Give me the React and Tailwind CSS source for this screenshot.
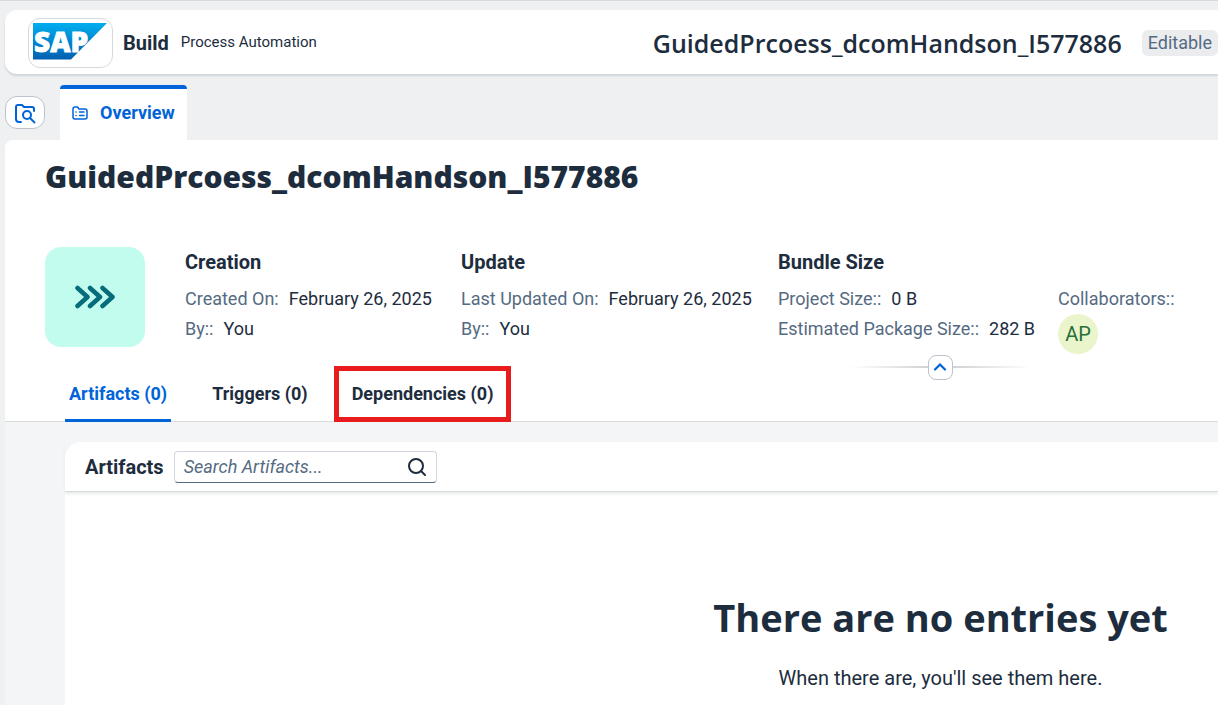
import React from "react";

function SapLogo() {
  return (
    <svg viewBox="0 0 75 37" className="block h-[37px] w-[75px] overflow-visible" role="img" aria-label="SAP">
      <defs>
        <linearGradient id="sap" x1="0" y1="0" x2="0" y2="1">
          <stop offset="0" stopColor="#00aeef" />
          <stop offset="1" stopColor="#0060b0" />
        </linearGradient>
      </defs>
      <path d="M0 0H74L38 36.500H0Z" fill="url(#sap)" />
      <text x="1" y="29" fontFamily="Open Sans, sans-serif" fontWeight="800" fontSize="28" fill="#fff" stroke="#fff" strokeWidth="0.8">SAP</text>
    </svg>
  );
}

function Fact({ label, value }) {
  return (
    <div className="flex h-[30px] items-center gap-[10px] whitespace-nowrap">
      <dt className="text-[#556b82]">{label}</dt>
      <dd>{value}</dd>
    </div>
  );
}

function Facts({ title, facts }) {
  return (
    <section>
      <h3 className="mb-[7px] h-[30px] text-xl leading-[30px] font-bold">{title}</h3>
      <dl className="text-lg">
        {facts.map(([label, value]) => (
          <Fact key={label} label={label} value={value} />
        ))}
      </dl>
    </section>
  );
}

export default function App() {
  return (
    <div className="flex min-h-screen flex-col overflow-x-hidden border-t border-[#d9d9dc] bg-[#eff0f2] font-[Roboto,sans-serif] text-[#1d2d3e]">
      <header className="mt-[9px] ml-[5px] flex h-16 items-center rounded-l-xl bg-white pt-px pl-[23px] shadow-[0_2px_2px_#ced5db]">
        <a href="#home" className="flex h-[50px] w-[85px] shrink-0 items-start justify-center rounded-xl border border-[#d5dadf] pt-1">
          <SapLogo />
        </a>
        <span className="ml-[10px] text-xl font-bold">Build</span>
        <span className="ml-3 text-[15px]">Process Automation</span>
        <div className="ml-auto flex items-center gap-5">
          <span className="font-['Open_Sans',sans-serif] text-[25px] leading-9 font-semibold">GuidedPrcoess_dcomHandson_I577886</span>
          <span className="rounded-md bg-[#eaecee] px-[6px] text-lg leading-[26px] text-[#556b82]">Editable</span>
        </div>
      </header>

      <nav className="mt-[11px] flex h-[55px] items-center pl-[5px]">
        <button aria-label="Browse project" className="flex h-[33px] w-10 items-center justify-center rounded-xl border border-[#bcc3ca] bg-white text-[#0064d9]">
          <svg viewBox="0 0 24 22" className="h-[22px] w-6" fill="none" stroke="currentColor" strokeWidth="2" strokeLinecap="round" strokeLinejoin="round">
            <path d="M8 20H6a3 3 0 0 1-3-3V5a2 2 0 0 1 2-2h4l2 2h8a2 2 0 0 1 2 2v2" />
            <circle cx="14" cy="13" r="4" />
            <path d="M17 16l4.500 4.500" />
          </svg>
        </button>
        <button className="ml-[15px] flex h-full items-center gap-3 rounded-t-sm border-t-4 border-[#0064d9] bg-white px-3 pb-1 text-lg font-bold text-[#0064d9]">
          <svg viewBox="0 0 16 14" className="h-[14px] w-4" fill="none" stroke="currentColor" strokeWidth="1.500" strokeLinecap="round" strokeLinejoin="round">
            <path d="M1 3a2 2 0 0 1 2-2h2.500l1.500 2H13a2 2 0 0 1 2 2v6a2 2 0 0 1-2 2H3a2 2 0 0 1-2-2Z" />
            <path d="M4 6h.1M7.500 6H12M4 9.500h.1M7.500 9.500H12" />
          </svg>
          Overview
        </button>
      </nav>

      <main className="ml-[5px] flex grow flex-col rounded-tl-lg bg-[#f4f5f7]">
        <div className="rounded-tl-lg border-b border-[#d9dbdd] bg-white">
          <h1 className="px-10 pt-[17px] font-['Open_Sans',sans-serif] text-[30px] leading-10 font-extrabold">GuidedPrcoess_dcomHandson_I577886</h1>
          <div className="flex items-start px-10 pt-[50px]">
            <div className="mr-10 flex size-[100px] shrink-0 items-center justify-center rounded-2xl bg-[#c2fcee]">
              <svg viewBox="0 0 42 24" className="h-6 w-[42px]" fill="none" stroke="#046c7a" strokeWidth="4.500" strokeLinecap="round" strokeLinejoin="round">
                <path d="M3.500 3l10 9-10 9M16 3l10 9-10 9M28.500 3l10 9-10 9" />
              </svg>
            </div>
            <div className="grid grid-cols-[276px_317px_280px_auto]">
              <Facts title="Creation" facts={[["Created On:", "February 26, 2025"], ["By::", "You"]]} />
              <Facts title="Update" facts={[["Last Updated On:", "February 26, 2025"], ["By::", "You"]]} />
              <Facts title="Bundle Size" facts={[["Project Size::", "0 B"], ["Estimated Package Size::", "282 B"]]} />
              <section className="pt-[37px]">
                <h3 className="text-lg leading-[30px] text-[#556b82]">Collaborators::</h3>
                <span className="flex size-10 items-center justify-center rounded-full bg-[#ebf5cb] text-xl text-[#256f3a]">AP</span>
              </section>
            </div>
          </div>
          <div className="flex h-[26px] items-center justify-center pl-[657px]">
            <span className="h-[2px] w-[78px] bg-linear-to-r from-transparent to-[#d0d2d4]" />
            <button aria-label="Collapse header" className="flex size-[25px] items-center justify-center rounded-lg border border-[#bcc3ca] bg-white text-[#0064d9]">
              <svg viewBox="0 0 14 10" className="h-[10px] w-[14px]" fill="none" stroke="currentColor" strokeWidth="2.200" strokeLinecap="round"><path d="M2 7.500l5-5 5 5" /></svg>
            </button>
            <span className="h-[2px] w-[78px] bg-linear-to-l from-transparent to-[#d0d2d4]" />
          </div>
          <div className="-mt-[14px] -mb-px flex h-14 w-fit pl-[60px] text-lg font-bold">
            <button className="border-b-[3px] border-[#0064d9] px-1 pt-[2px] text-[#0064d9]">Artifacts (0)</button>
            <button className="ml-[37px] border-b-[3px] border-transparent px-1 pt-[2px]">Triggers (0)</button>
            <button className="ml-[22px] border-[5px] border-[#e81c1c] px-[13px]">Dependencies (0)</button>
          </div>
        </div>

        <section className="mt-5 ml-[60px] flex grow flex-col rounded-tl-2xl bg-white">
          <div className="flex h-[50px] items-center border-b border-[#d9dbdd] pl-5 shadow-[0_2px_3px_#e8eaec]">
            <h2 className="text-xl font-bold">Artifacts</h2>
            <div className="relative ml-[10px]">
              <input type="search" aria-label="Search Artifacts" placeholder="Search Artifacts..." className="block h-8 w-[263px] rounded border border-[#d0d7de] border-b-[#556b82] bg-white pr-10 pl-[9px] text-lg placeholder:text-[#556b82] placeholder:italic" />
              <button aria-label="Search" className="absolute top-[6px] right-[10px]">
                <svg viewBox="0 0 20 20" className="size-5" fill="none" stroke="currentColor" strokeWidth="2" strokeLinecap="round"><circle cx="9" cy="9" r="7" /><path d="M14 14l4 4" /></svg>
              </button>
            </div>
          </div>
          <div className="pt-[95px] pl-[598px] text-center whitespace-nowrap">
            <h2 className="font-['Open_Sans',sans-serif] text-[38px] leading-[60px] font-bold">There are no entries yet</h2>
            <p className="mt-4 text-xl leading-[30px]">When there are, you'll see them here.</p>
          </div>
        </section>
      </main>
    </div>
  );
}
